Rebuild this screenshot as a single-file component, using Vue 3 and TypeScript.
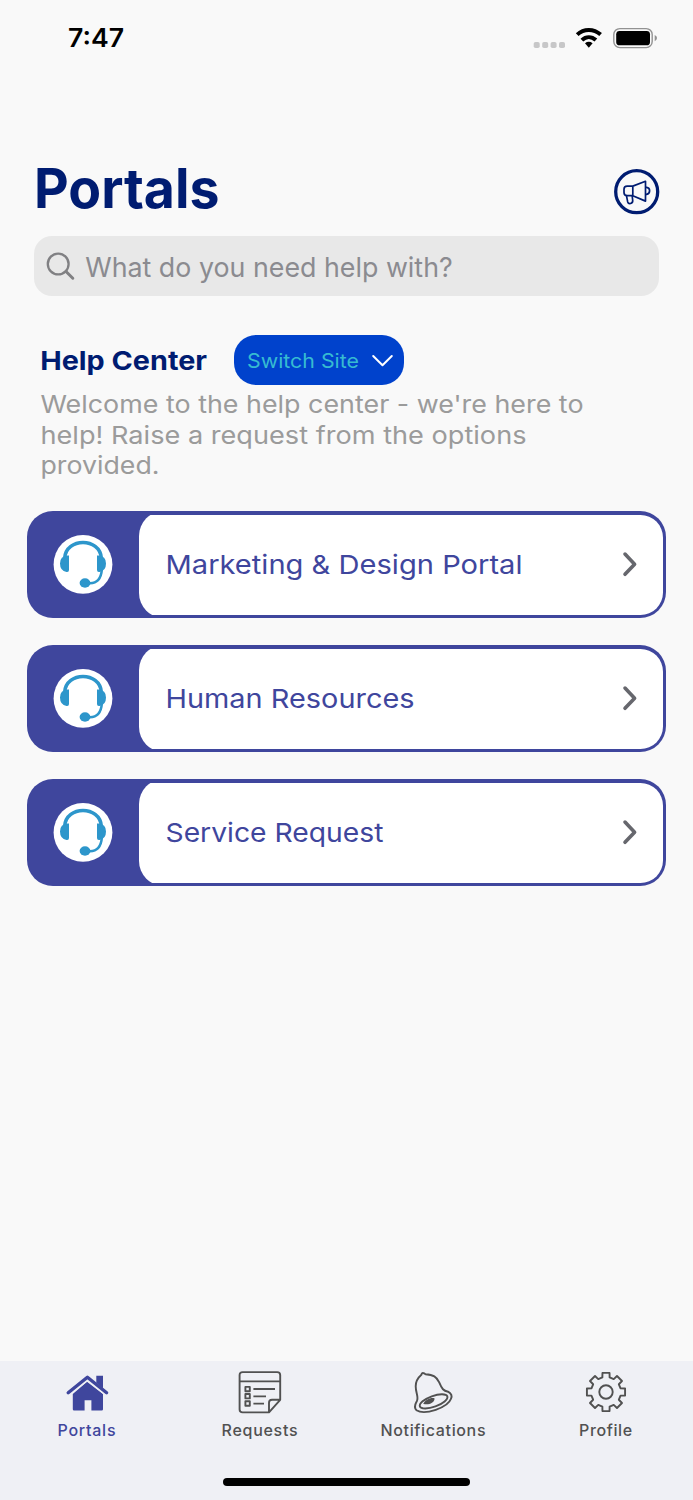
<script setup lang="ts">
interface Portal {
  name: string
  width: number
}

const portals: Portal[] = [
  { name: 'Marketing & Design Portal', width: 357 },
  { name: 'Human Resources', width: 249 },
  { name: 'Service Request', width: 218 },
]

const welcome = [
  { text: "Welcome to the help center - we're here to", width: 543, y: 20 },
  { text: 'help! Raise a request from the options', width: 486, y: 51 },
  { text: 'provided.', width: 119, y: 81 },
]

// Outline of an eight-toothed gear centred on the origin.
function gearPath(teeth: number, outer: number, inner: number): string {
  const points: string[] = []
  const step = 360 / teeth
  for (let i = 0; i < teeth; i++) {
    const corners: [number, number][] = [
      [-14, inner],
      [-10.5, outer],
      [10.5, outer],
      [14, inner],
    ]
    for (const [offset, radius] of corners) {
      const angle = ((i * step + offset) * Math.PI) / 180
      points.push(`${(radius * Math.sin(angle)).toFixed(2)} ${(-radius * Math.cos(angle)).toFixed(2)}`)
    }
  }
  return `M${points.join('L')}Z`
}

const gear = gearPath(8, 19.4, 15)
</script>

<template>
  <div class="screen">
    <header class="status">
      <svg class="time" width="60" height="32"><text x="0" y="23.3" textLength="56" lengthAdjust="spacingAndGlyphs">7:47</text></svg>
      <svg class="indicators" width="126" height="26" viewBox="0 0 126 26">
        <g fill="#c7c7c8">
          <rect x="3.7" y="16" width="6" height="6" rx="1.8" />
          <rect x="12.2" y="16" width="6" height="6" rx="1.8" />
          <rect x="20.6" y="16" width="6" height="6" rx="1.8" />
          <rect x="29" y="16" width="6" height="6" rx="1.8" />
        </g>
        <g fill="none" stroke="#000" stroke-width="4">
          <path d="M47.2 8.6C53.8 2.4 63.6 2.4 70.6 8.6" />
          <path d="M51.9 14.1C56 10.2 61.6 10.2 65.9 14.1" />
        </g>
        <path d="M55 17.2Q58.8 14.3 62.6 17.2L58.8 21.7Z" />
        <rect x="83.8" y="2.6" width="38.4" height="19" rx="6" fill="none" stroke="#929292" stroke-width="1.4" />
        <rect x="86.2" y="4.9" width="33.8" height="14.4" rx="3.4" />
        <path d="M124.7 9q2.3 1 2.3 3.1t-2.3 3.1z" fill="#929292" />
      </svg>
    </header>

    <section class="heading">
      <svg class="title" width="190" height="62"><text x="-2" y="45.6" textLength="185.5" lengthAdjust="spacingAndGlyphs">Portals</text></svg>
      <svg width="46" height="46" viewBox="0 0 46 46" fill="none" stroke="#001c71" stroke-width="1.7" stroke-linejoin="round">
        <circle cx="22.7" cy="22.7" r="21" stroke-width="3.3" />
        <path d="M13.2 17.1H18.8V26.7H13.2Q10 26.7 10 23.5V20.3Q10 17.1 13.2 17.1ZM18.8 17.1 31.5 12.3V32.1L18.8 26.7" />
        <path d="M31.5 18.3H32.6Q35.6 18.7 35.6 21.7T32.6 25.3H31.5M12.5 26.9 13.7 32.9Q14.3 35 16.6 34.5Q18.9 33.9 18.7 31.5L18.2 27" />
      </svg>
    </section>

    <div class="search">
      <svg width="30" height="30" viewBox="0 0 30 30" fill="none" stroke="#808083">
        <circle cx="11.2" cy="13" r="10.4" stroke-width="2.3" />
        <path d="M19 20.5 25.8 27.2" stroke-width="3" stroke-linecap="round" />
      </svg>
      <svg class="prompt" width="374" height="40"><text x="-0.8" y="30.6" textLength="367.5" lengthAdjust="spacingAndGlyphs">What do you need help with?</text></svg>
    </div>

    <section class="intro">
      <div class="site">
        <svg class="site-name" width="172" height="36"><text x="-0.8" y="27.6" textLength="166.8" lengthAdjust="spacingAndGlyphs">Help Center</text></svg>
        <button class="switch" type="button">
          <svg width="114" height="30"><text x="0" y="22.6" textLength="112" lengthAdjust="spacingAndGlyphs">Switch Site</text></svg>
          <svg width="22" height="14" viewBox="0 0 22 14" fill="none" stroke="#fff" stroke-width="2" stroke-linecap="round" stroke-linejoin="round"><path d="M1.2 3 10.5 12.3 19.8 3" /></svg>
        </button>
      </div>
      <svg class="welcome" width="580" height="96">
        <text v-for="line in welcome" :key="line.text" x="-0.5" :y="line.y" :textLength="line.width" lengthAdjust="spacingAndGlyphs">{{ line.text }}</text>
      </svg>
    </section>

    <main class="portals">
      <article v-for="portal in portals" :key="portal.name" class="card">
        <div class="inner">
          <div class="badge">
            <svg width="60" height="60" viewBox="0 0 60 60">
              <circle cx="30" cy="30.4" r="29.4" fill="#fff" />
              <path d="M11.7 24C13 3.3 47 3.3 48.3 24" fill="none" stroke="#2d96cb" stroke-width="3.6" />
              <path d="M16 21.5H14.5Q7 22 7 29.5Q7 36.8 13.5 38H14.2Q16 38 16 36ZM44 21.5H45.5Q53 22 53 29.5Q53 36.8 46.5 38H45.8Q44 38 44 36Z" fill="#2d96cb" />
              <path d="M48.8 36Q47.6 49.2 37 49.2H34" fill="none" stroke="#2d96cb" stroke-width="2.6" />
              <ellipse cx="32" cy="49" rx="5.4" ry="4.7" fill="#2d96cb" />
            </svg>
          </div>
          <div class="panel">
            <svg class="portal-name" width="400" height="40"><text x="-0.5" y="28.8" :textLength="portal.width" lengthAdjust="spacingAndGlyphs">{{ portal.name }}</text></svg>
            <svg class="arrow" width="16" height="26" viewBox="0 0 16 26" fill="none" stroke="#66676d" stroke-width="3.6" stroke-linecap="round" stroke-linejoin="round"><path d="M3 3.1 12.6 13.2 3 23.3" /></svg>
          </div>
        </div>
      </article>
    </main>

    <nav class="tabs">
      <div class="row">
        <a class="tab active">
          <svg width="44" height="44" viewBox="0 0 44 44" fill="#3f469d">
            <path d="M7.8 24 22 11.8 38 24V39.2Q38 40.5 36.7 40.5H26.4V30.3H19.6V40.5H9.1Q7.8 40.5 7.8 39.2Z" />
            <path d="M2.6 22.8 22.4 7 42.2 22.8" fill="none" stroke="#eff0f5" stroke-width="7" stroke-linejoin="round" />
            <path d="M31.3 5.8H38V18.4L31.3 12.8Z" />
            <path d="M3.2 22.8 22.4 7.2 41.6 22.8" fill="none" stroke="#3f469d" stroke-width="3.4" stroke-linecap="round" stroke-linejoin="round" />
          </svg>
          <svg class="label" width="60" height="22"><text x="29.5" y="17" text-anchor="middle" textLength="58">Portals</text></svg>
        </a>
        <a class="tab">
          <svg width="44" height="44" viewBox="0 -0.4 44 44" fill="none" stroke="#515151" stroke-width="1.9" stroke-linejoin="round">
            <path d="M4.6 1.7H39.2Q42.2 1.7 42.2 4.7V29.4L31 42H4.6Q1.6 42 1.6 39V4.7Q1.6 1.7 4.6 1.7ZM1.6 11H42.2M31 42V32.4Q31 29.4 34 29.4H42.2" />
            <path d="M7.4 16.5h4.4v4.4H7.4zM7.4 23.6h4.4v4.4H7.4zM7.4 30.9h4.4v4.4H7.4z" />
            <path d="M15.4 18.6H37M15.4 26H28M15.4 33.2H26" />
          </svg>
          <svg class="label" width="80" height="22"><text x="39.6" y="17" text-anchor="middle" textLength="76">Requests</text></svg>
        </a>
        <a class="tab">
          <svg width="44" height="44" viewBox="0 0 44 44" fill="none" stroke="#515151" stroke-width="1.9" stroke-linejoin="round">
            <path d="M10.4 4.8Q11 2.1 13.2 3.4L14.5 4.2C22.5 4.8 25.5 6.8 28.2 12.4C31 19 32.5 21 37 21.7Q42 24.5 40 28.7C37 37.3 13.7 45.8 5.5 40.2C3.2 38.3 4 34.3 6 30.7C7.8 27 4.6 22.5 4.7 16.2C4.7 11.4 6.6 8.1 10.4 4.8Z" />
            <ellipse cx="22.6" cy="31.4" rx="14.6" ry="5.4" transform="rotate(-20 22.6 31.4)" />
            <path d="M12.2 33.8C14 29.8 20.5 26.8 23.6 28.4C23.4 33 17 35.5 12.2 33.8Z" fill="#515151" stroke="none" />
          </svg>
          <svg class="label" width="110" height="22"><text x="55" y="17" text-anchor="middle" textLength="105">Notifications</text></svg>
        </a>
        <a class="tab">
          <svg width="44" height="44" viewBox="-22 -22 44 44" fill="none" stroke="#515151" stroke-width="1.9" stroke-linejoin="round">
            <path :d="gear" />
            <circle r="6.7" />
          </svg>
          <svg class="label" width="60" height="22"><text x="29.6" y="17" text-anchor="middle" textLength="53">Profile</text></svg>
        </a>
      </div>
      <div class="home-bar"></div>
    </nav>
  </div>
</template>

<style>
body {
  background: #f9f9f9;
}
</style>

<style scoped>
.screen {
  width: 693px;
  height: 1500px;
  display: flex;
  flex-direction: column;
  background: #f9f9f9;
  font-family: Inter, "Liberation Sans", sans-serif;
}
svg {
  display: block;
  flex: none;
  overflow: visible;
}
.status,
.heading,
.search,
.intro,
.portals,
.card,
.panel,
.tabs {
  box-sizing: border-box;
}
.status {
  display: flex;
  justify-content: space-between;
  align-items: flex-start;
  height: 138px;
  padding: 24px 37px 0 68px;
}
.time {
  font-size: 25.5px;
  font-weight: 600;
}
.indicators {
  margin-top: 2px;
}
.heading {
  display: flex;
  justify-content: space-between;
  align-items: flex-start;
  height: 74px;
  padding: 0 33px 0 36px;
}
.title {
  margin-top: 24px;
  font-size: 54.5px;
  font-weight: 700;
  fill: #001c71;
}
.heading > svg:last-child {
  margin-top: 31px;
}
.search {
  display: flex;
  align-items: center;
  height: 60px;
  margin: 24px 34px 0;
  padding: 0 13px;
  gap: 9px;
  border-radius: 18px;
  background: #e8e8e8;
}
.prompt {
  font-size: 27.5px;
  fill: #8b8b90;
}
.intro {
  height: 215px;
  padding: 39px 40px 0 41px;
}
.site {
  display: flex;
  align-items: center;
  gap: 21px;
}
.site-name {
  font-size: 26px;
  font-weight: 700;
  fill: #001c71;
}
.switch {
  display: flex;
  align-items: center;
  gap: 11px;
  width: 169.5px;
  height: 50px;
  padding: 0 9px 0 13px;
  border: 0;
  border-radius: 22px;
  background: #0042cc;
  font-family: inherit;
  font-size: 20px;
  fill: #36bbd1;
}
.welcome {
  margin-top: 8px;
  font-size: 24.5px;
  fill: #9b9b9b;
}
.portals {
  display: flex;
  flex: 1;
  flex-direction: column;
  gap: 27px;
  padding: 0 27px;
}
.card {
  height: 107px;
  padding: 3.5px;
  border-radius: 26px;
  background: #3f469d;
}
.inner {
  display: flex;
  align-items: center;
  height: 100%;
  border-radius: 22.5px;
  overflow: hidden;
}
.badge {
  display: flex;
  flex: none;
  width: 108.5px;
  margin-top: -1px;
  padding-left: 22.5px;
  box-sizing: border-box;
}
.panel {
  display: flex;
  flex: 1;
  align-items: center;
  justify-content: space-between;
  height: 107px;
  padding: 0 24.5px 0 27px;
  border-radius: 25px 0 0 25px;
  background: #fff;
}
.arrow {
  margin-top: -1px;
}
.portal-name {
  font-size: 26px;
  fill: #3f469d;
}
.tabs {
  height: 139px;
  background: #eff0f5;
  padding-top: 9px;
}
.row {
  display: grid;
  grid-template-columns: repeat(4, 1fr);
  height: 108px;
}
.tab {
  display: flex;
  flex-direction: column;
  align-items: center;
  gap: 5px;
}
.label {
  font-size: 16px;
  font-weight: 500;
  fill: #515151;
}
.active .label {
  fill: #3f469d;
}
.home-bar {
  width: 247px;
  height: 8px;
  margin: 0 auto;
  border-radius: 4px;
  background: #000;
}
</style>
